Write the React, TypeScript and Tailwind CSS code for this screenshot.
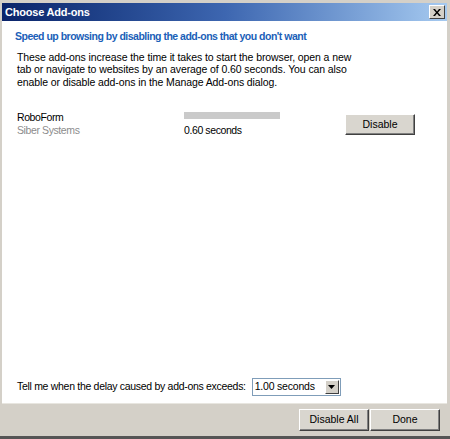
import React from 'react';

const font = { fontFamily: '"Liberation Sans", Arial, sans-serif' };

const btn =
  'bg-[#d9d6cf] border border-t-white border-l-white border-r-[#404040] border-b-[#404040] shadow-[inset_-1px_-1px_0_#808080]';

const App: React.FC = () => {
  return (
    <div className="w-[450px] h-[439px] bg-[#d4d0c8] pt-[3px] pl-[2px] pr-[3px] border-b-[3px] border-[#555555] flex flex-col text-[10.5px] text-black" style={font}>
      <div className="h-[18px] flex items-center justify-between pl-[3px] pr-[2px] bg-gradient-to-r from-[#0a246a] via-[#3d66b0] to-[#a6caf0]">
        <span className="text-white font-bold text-[11px] leading-none tracking-[-0.2px]">Choose Add-ons</span>
        <div className="w-[16px] h-[14px] bg-[#d4d0c8] border border-t-white border-l-white border-r-[#404040] border-b-[#404040] flex items-center justify-center">
          <svg width="8" height="7" viewBox="0 0 8 7">
            <path d="M0 0h2l2 2.5L6 0h2L5 3.5 8 7H6L4 4.5 2 7H0l3-3.5z" fill="#000" />
          </svg>
        </div>
      </div>
      <div className="flex-1 bg-white flex flex-col px-[13px] pt-[8px] pb-[7px]">
        <div className="text-[#1b5fb8] font-bold tracking-[-0.5px]">Speed up browsing by disabling the add-ons that you don't want</div>
        <p className="mt-[6px] leading-[12.5px] pl-[2px] w-[345px] tracking-[-0.1px]">
          These add-ons increase the time it takes to start the browser, open a new tab or navigate to websites by an average of 0.60 seconds. You can also enable or disable add-ons in the Manage Add-ons dialog.
        </p>
        <div className="mt-[23px] flex pl-[2px] tracking-[-0.4px]">
          <div className="w-[167px] leading-[13px]">
            <div>RoboForm</div>
            <div className="text-[#8c8c8c]">Siber Systems</div>
          </div>
          <div className="w-[161px] pt-[1px]">
            <div className="w-[96px] h-[7px] bg-[#cacaca]" />
            <div className="mt-[4px]">0.60 seconds</div>
          </div>
          <button className={`mt-[3px] w-[70px] h-[21px] tracking-normal ${btn}`}>Disable</button>
        </div>
        <div className="flex-1" />
        <div className="flex items-center pl-[2px]">
          <span className="tracking-[-0.3px]">Tell me when the delay caused by add-ons exceeds:</span>
          <div className="ml-[6px] w-[89px] h-[18px] border border-[#7f9db9] flex items-center justify-between pl-[2px] pr-[1px]">
            <span className="whitespace-nowrap tracking-[-0.2px]">1.00 seconds</span>
            <div className="w-[14px] h-[14px] bg-[#d4d0c8] border border-t-white border-l-white border-r-[#404040] border-b-[#404040] flex items-center justify-center">
              <svg width="7" height="4" viewBox="0 0 7 4"><path d="M0 0h7L3.5 4z" fill="#000" /></svg>
            </div>
          </div>
        </div>
      </div>
      <div className="h-[33px] flex items-center justify-end pr-[7px] gap-[1px] border-t border-[#e8e6e0]">
        <button className={`w-[70px] h-[22px] ${btn}`}>Disable All</button>
        <button className={`w-[70px] h-[22px] ${btn}`}>Done</button>
      </div>
    </div>
  );
};

export default App;
